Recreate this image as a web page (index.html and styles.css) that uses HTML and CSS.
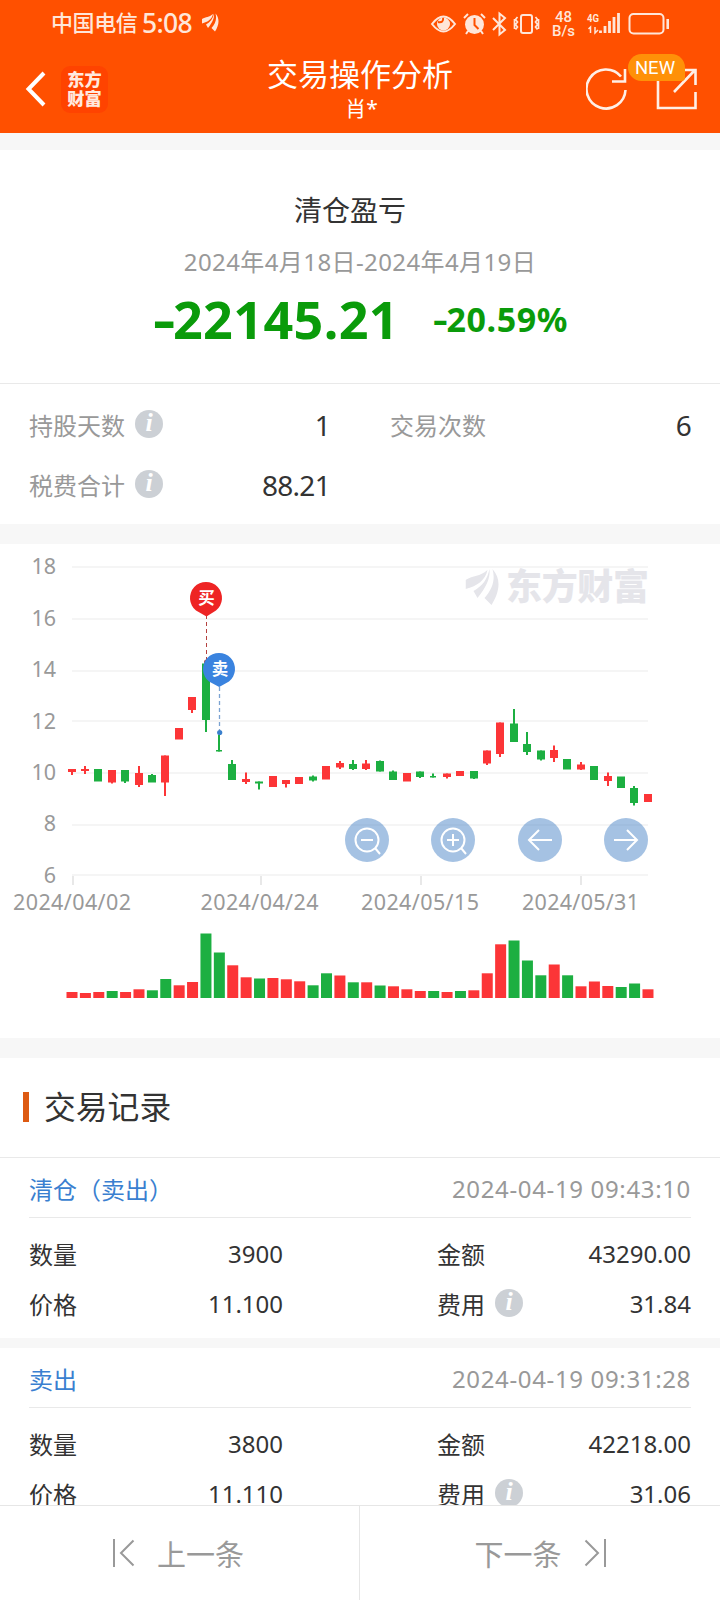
FILE: index.html
```html
<!DOCTYPE html>
<html lang="zh-CN">
<head>
<meta charset="utf-8">
<title>交易操作分析</title>
<link rel="stylesheet" href="styles.css">
</head>
<body>
<svg class="defs" width="0" height="0" aria-hidden="true">
  <symbol id="wing" viewBox="0 0 34 36">
    <path d="M0 11C8 6 14 8 22 1C20 11 12 17 0 20Z"/>
    <path d="M24 0C25 10 20 19 12 29L8 22C17 17 22 10 24 0Z"/>
    <path d="M27 0C37 11 33 25 26 36L19 29C27 20 30 11 27 0Z"/>
  </symbol>
</svg>
<div class="screen">
  <header class="header">
    <div class="status">
      <span class="carrier">中国电信</span><span class="clock">5:08</span>
      <svg class="status-wing"><use href="#wing"/></svg>
      <svg class="status-icons" width="244" height="44" viewBox="428 0 244 44" fill="none" stroke="#ffe6d9" stroke-width="2">
        <path d="M432 23Q443.500 8 455 23Q443.500 38 432 23Z"/>
        <circle cx="443.500" cy="23" r="6.500" fill="#ffe6d9" stroke="none"/><path d="M438 21Q444 22 443 17" stroke="#ff5000"/>
        <circle cx="474.500" cy="23.500" r="9.500" fill="#ffe6d9" stroke="none"/><path d="M474.500 17v7l4 4" stroke="#ff5000"/><path d="M464 17l4-4M485 17l-4-4M468 30l-2 3M481 30l2 3"/>
        <path d="M493 17l12 12-5.500 4.500V12.500L505 17 493 29"/>
        <rect x="521" y="14" width="11" height="18" rx="2"/><path d="M517.500 16l-2 2.500 2 2.500-2 2.500 2 2.500-2 2.500M514.500 18v10M535.500 16l2 2.500-2 2.500 2 2.500-2 2.500 2 2.500M538.500 18v10" stroke-width="1.700"/>
        <g class="status-text"><text x="563.500" y="21" text-anchor="middle">48</text><text x="563.500" y="35" text-anchor="middle">B/s</text></g>
        <text class="net-text" x="587" y="20.500" textLength="12" lengthAdjust="spacingAndGlyphs">4G</text>
        <path d="M590.500 32v-6l-2 2M595 26v6l3-3" stroke-width="1.500"/>
        <path d="M600.500 32v-2.500M605 32v-7M609.500 32V20M614 32V16M618.500 32V12" stroke-width="2.800"/>
        <rect x="629.500" y="13" width="34" height="19.500" rx="4"/><path d="M667.700 18v10" stroke-width="2.600"/>
      </svg>
    </div>
    <div class="nav">
      <svg class="back" width="22" height="38" viewBox="0 0 22 38"><path d="M19 3L3.500 19 19 35" fill="none" stroke="#fff" stroke-width="4"/></svg>
      <div class="brand"><span>东方</span><span>财富</span></div>
      <div class="heading"><h1>交易操作分析</h1><p>肖*</p></div>
      <svg class="refresh" width="44" height="44" viewBox="0 0 44 44" fill="none" stroke="#ffefe6" stroke-width="2.600"><path d="M39.500 23A19.500 19.500 0 1 1 35 9.500"/><path d="M39 2v12.500H26"/></svg>
      <div class="share">
        <svg width="42" height="42" viewBox="0 0 42 42" fill="none" stroke="#ffefe6" stroke-width="2.600"><path d="M14 2H2v38h37.500V24M26 2h13.500v15M39 2L18 24"/></svg>
        <span class="badge">NEW</span>
      </div>
    </div>
  </header>

  <main class="content">
    <section class="summary">
      <h2>清仓盈亏</h2>
      <p class="period">2024年4月18日-2024年4月19日</p>
      <p class="result"><b class="amount"><i>-</i>22145.21</b><b class="rate"><i>-</i>20.59%</b></p>
    </section>
    <section class="stats">
      <div class="pair"><span class="label">持股天数<em class="info">i</em></span><span class="value">1</span></div>
      <div class="pair"><span class="label">交易次数</span><span class="value">6</span></div>
      <div class="pair"><span class="label">税费合计<em class="info">i</em></span><span class="value">88.21</span></div>
    </section>

    <section class="chart">
      <svg class="plot" width="720" height="494" viewBox="0 544 720 494">
        <path class="grid" d="M72 567H648M72 619H648M72 671H648M72 721H648M72 773H648M72 825H648M72 875H648"/>
        <path class="ticks" d="M73 876v9M261 876v9M421 876v9M581 876v9"/>
        <g class="axis" text-anchor="end">
          <text x="56" y="574">18</text><text x="56" y="626">16</text><text x="56" y="677">14</text><text x="56" y="729">12</text><text x="56" y="780">10</text><text x="56" y="831">8</text><text x="56" y="883">6</text>
        </g>
        <g class="axis">
          <text x="13" y="910" textLength="118">2024/04/02</text><text x="200.500" y="910" textLength="118">2024/04/24</text><text x="361" y="910" textLength="118">2024/05/15</text><text x="522" y="910" textLength="117">2024/05/31</text>
        </g>
        <g class="watermark"><use href="#wing" x="465.500" y="569" width="34" height="36"/><text x="506" y="600" textLength="143">东方财富</text></g>
        <g id="candles"></g>
        <g id="volumes"></g>
        <path d="M206.500 615V661" stroke="#b5423f" stroke-dasharray="4 3"/>
        <circle cx="206.500" cy="662" r="2.500" fill="#b5423f"/>
        <path d="M219.500 687V731" stroke="#7ba3d2" stroke-width="1.300" stroke-dasharray="4 3"/>
        <circle cx="219.700" cy="732.500" r="2.600" fill="#3b80cd"/>
        <path d="M196 610.500A16 16 0 1 1 216 610.500L206.500 616.500Z" fill="#ee2424"/>
        <path d="M209 681.500A16 16 0 1 1 229 681.500L219.200 687Z" fill="#3a83df"/>
        <g class="pin-text" text-anchor="middle"><text x="206.500" y="604">买</text><text x="220" y="675">卖</text></g>
      </svg>
      <div class="controls">
        <button><svg viewBox="0 0 44 44"><circle cx="22" cy="22" r="11.500"/><path d="M16 22h12M30 30l5 6"/></svg></button>
        <button><svg viewBox="0 0 44 44"><circle cx="22" cy="22" r="11.500"/><path d="M16 22h12M22 16v12M30 30l5 6"/></svg></button>
        <button><svg viewBox="0 0 44 44"><path d="M34 22H11M21 12L11 22l10 10"/></svg></button>
        <button><svg viewBox="0 0 44 44"><path d="M10 22h23M23 12l10 10-10 10"/></svg></button>
      </div>
    </section>

    <section class="records">
      <h2 class="records-title">交易记录</h2>
      <article class="record">
        <div class="record-head"><span class="kind">清仓（卖出）</span><time>2024-04-19 09:43:10</time></div>
        <div class="record-grid">
          <div class="pair"><span>数量</span><span>3900</span></div>
          <div class="pair"><span>金额</span><span>43290.00</span></div>
          <div class="pair"><span>价格</span><span>11.100</span></div>
          <div class="pair"><span class="label">费用<em class="info">i</em></span><span>31.84</span></div>
        </div>
      </article>
      <article class="record">
        <div class="record-head"><span class="kind">卖出</span><time>2024-04-19 09:31:28</time></div>
        <div class="record-grid">
          <div class="pair"><span>数量</span><span>3800</span></div>
          <div class="pair"><span>金额</span><span>42218.00</span></div>
          <div class="pair"><span>价格</span><span>11.110</span></div>
          <div class="pair"><span class="label">费用<em class="info">i</em></span><span>31.06</span></div>
        </div>
      </article>
    </section>
  </main>

  <footer class="pager">
    <a class="prev"><svg width="22" height="28" viewBox="0 0 22 28"><path d="M1 0v28M20.500 1.500L8 14l12.500 12.500"/></svg>上一条</a>
    <a class="next">下一条<svg width="22" height="28" viewBox="0 0 22 28"><path d="M21 0v28M1.500 1.500L14 14 1.500 26.500"/></svg></a>
  </footer>
</div>
<script src="chart.js"></script>
</body>
</html>
```
FILE: styles.css
```css
* { box-sizing: border-box; }
body { margin: 0; font-family: "Noto Sans", "Noto Sans CJK SC", sans-serif; color: #333; background: #fff; }
h1, h2, p { margin: 0; font-weight: 400; }
.defs { position: absolute; }
.screen { width: 720px; height: 1600px; overflow: hidden; display: flex; flex-direction: column; background: #fff; }

.header { height: 133px; flex: none; background: #ff5000; color: #fff; }
.status { height: 45px; display: flex; align-items: center; padding: 1px 48px 0 51px; color: #ffe6d9; }
.carrier { font-size: 22px; font-weight: 500; letter-spacing: -.4px; width: 91px; line-height: 42px; white-space: nowrap; padding-bottom: 2px; }
.clock { font-size: 26.500px; font-weight: 500; letter-spacing: -.7px; width: 60px; line-height: 44px; }
.status-wing { width: 17px; height: 19px; fill: #ffe6d9; margin-top: -2px; }
.status-icons { margin-left: auto; }
.status-text { font: 500 15px Roboto, sans-serif; fill: #ffe6d9; stroke: none; }
.net-text { font: 700 11px Roboto, sans-serif; fill: #ffe6d9; stroke: none; }
.nav { height: 88px; display: flex; align-items: center; padding: 0 22px 0 25px; }
.brand { width: 47px; height: 47px; margin-left: 14px; padding-bottom: 2px; border-radius: 9px; background: #ff4300; display: flex; flex-direction: column; align-items: center; justify-content: center; font: 900 17.200px/19.500px "Noto Sans CJK SC", sans-serif; color: #ffe9df; }
.heading { flex: 1; text-align: center; padding-left: 26px; }
.heading h1 { font-size: 31px; line-height: 38px; }
.heading p { font-size: 21px; line-height: 30px; padding-left: 3px; }
.refresh { margin: 0 26px 0 0; }
.share { width: 42px; height: 42px; position: relative; }
.share svg { display: block; }
.badge { position: absolute; left: -28px; top: -14px; width: 57px; height: 27px; border-radius: 14px 14px 4px 14px; background: #ff9108; font: 18.500px/28px Roboto, sans-serif; text-align: center; padding-right: 3px; }

.content { flex: 1; min-height: 0; overflow: hidden; border-top: 17px solid #f7f7f7; }
.summary { height: 234px; padding-top: 39px; text-align: center; border-bottom: 1px solid #e9e9e9; }
.summary h2 { font-size: 28px; line-height: 42px; padding-right: 20px; }
.period { font-size: 24px; line-height: 36px; margin-top: 13px; letter-spacing: .4px; color: #999; }
.result { display: flex; align-items: center; justify-content: center; height: 70px; margin-top: 4px; gap: 36px; color: #0a9b0a; padding-left: 4px; }
.result b { font-weight: 700; line-height: 70px; white-space: nowrap; }
.result i { font-style: normal; display: inline-block; }
.amount { font-size: 52px; letter-spacing: .4px; }
.rate { font-size: 34px; letter-spacing: .6px; margin-top: -1px; }
.amount i, .rate i { transform: scaleX(1.350); }

.stats { height: 140px; padding: 11px 29px 0 29px; display: grid; grid-template-columns: 301px 301px; grid-auto-rows: 60px; column-gap: 60px; }
.pair { display: flex; align-items: center; justify-content: space-between; }
.label { display: flex; align-items: center; }
.info { width: 28px; height: 28px; margin: 0 0 0 10px; border-radius: 50%; background: #ccd0d5; color: #fff; font: italic 700 26px/26px "Liberation Serif", serif; text-align: center; }
.stats .label { font-size: 24px; color: #999; margin-top: -2px; }
.stats .value { font-size: 28px; letter-spacing: -.7px; }

.chart { position: relative; height: 534px; border-top: 20px solid #f7f7f7; border-bottom: 20px solid #f7f7f7; }
.plot { display: block; }
.grid { stroke: #f5f5f5; stroke-width: 2; }
.ticks { stroke: #e8e8e8; stroke-width: 2; }
.axis { font-size: 21.500px; fill: #999; }
.watermark { fill: #e5e5ea; font: 900 36px "Noto Sans CJK SC", sans-serif; }
.pin-text { font: 700 16.500px "Noto Sans CJK SC", sans-serif; fill: #fff; }
.up { fill: #fc3537; }
.down { fill: #1caf41; }
.controls { position: absolute; top: 274px; left: 345px; width: 303px; display: flex; justify-content: space-between; }
.controls button { width: 44px; height: 44px; padding: 0; border: 0; border-radius: 50%; background: rgba(75, 134, 200, .5); }
.controls svg { display: block; width: 44px; height: 44px; fill: none; stroke: #fff; stroke-width: 2; }

.records-title { height: 100px; display: flex; align-items: center; padding: 0 0 1px 23px; font-size: 31.800px; line-height: 46px; border-bottom: 1px solid #e9e9e9; }
.records-title::before { content: ""; width: 6px; height: 30px; margin-right: 15px; background: #dd5a12; }
.record { height: 190px; padding: 0 29px; border-bottom: 10px solid #f7f7f7; font-size: 24px; }
.record-head { height: 60px; display: flex; align-items: center; justify-content: space-between; border-bottom: 1px solid #e9e9e9; padding-top: 1px; }
.kind { color: #3a7fd0; }
.record time { color: #999; letter-spacing: .65px; }
.record-grid { padding-top: 10px; display: grid; grid-template-columns: 254px 254px; justify-content: space-between; grid-auto-rows: 50px; }
.record .info { margin-top: -1px; }

.pager { height: 95px; flex: none; display: flex; background: #fff; border-top: 1px solid #e6e6e6; color: #999; font-size: 29px; }
.pager a { flex: 1; display: flex; align-items: center; gap: 22px; }
.pager svg { fill: none; stroke: #999; stroke-width: 2; }
.prev { padding-left: 113px; border-right: 1px solid #e6e6e6; }
.next { padding-left: 115px; }
```
FILE: chart.js
```js
const NS = "http://www.w3.org/2000/svg";
const FIRST = 72, STEP = 13.395, BASE = 998;

// Each row: direction, body top, body bottom, wick top, wick bottom, volume height,
// and the volume bar's own direction where it differs.
const days = [
  ["up", 769, 772, 769, 775, 6], ["up", 769, 771, 766, 774, 5], ["down", 769, 781.5, 769, 781, 6, "up"],
  ["up", 770, 782.5, 770, 783.5, 7, "down"], ["down", 770, 781.5, 770, 783, 6, "up"], ["up", 773, 785, 766, 787, 8.700],
  ["down", 775, 782.5, 774, 782, 7.700], ["up", 755.5, 782.5, 755.5, 796, 19, "down"], ["up", 728, 739.5, 728, 739, 12.700],
  ["up", 697, 710, 697, 713, 16], ["down", 663.5, 720, 663.5, 732, 64.500], ["down", 750, 751.5, 735, 751.5, 45.500],
  ["down", 764, 780, 760, 780, 32.700, "up"], ["up", 779, 782, 772.5, 784, 20.700], ["down", 781.5, 783.5, 781.5, 789.5, 19.500],
  ["up", 776, 787, 776, 787, 20], ["up", 780, 784, 780, 787.5, 18.700], ["up", 777, 784, 777, 784, 16.700],
  ["down", 776.5, 780.5, 775.5, 781.5, 12.700], ["up", 766, 779.5, 766, 779.5, 24.700, "down"], ["up", 763, 767.5, 761, 769, 22.500],
  ["down", 764, 769, 760, 770, 15.700], ["up", 763.5, 769, 760, 770, 15.700], ["down", 761, 771.5, 760.5, 771.5, 12.500],
  ["down", 771.5, 780, 770.5, 780, 11.700, "up"], ["up", 773, 781.5, 773, 781.5, 8.700], ["down", 771.5, 777, 771.5, 778, 7, "up"],
  ["down", 776, 777.5, 773.5, 777.5, 7], ["up", 773.5, 777, 773.5, 778.5, 6], ["up", 771, 776, 771, 776, 7, "down"],
  ["down", 771, 778.5, 771, 779, 7.700, "up"], ["up", 750.5, 763.5, 750.5, 765, 24.700], ["up", 722.5, 754, 722.5, 757, 53.700],
  ["down", 723.5, 742, 709, 742, 57.500], ["down", 744, 752, 732, 755, 37.500], ["down", 750.5, 759.5, 750.5, 760.5, 22.700],
  ["up", 750, 758, 745.5, 762, 33.500], ["down", 759, 769.5, 759, 769.5, 22.700], ["up", 764.5, 769.5, 762, 770, 11.700],
  ["down", 766, 780, 766, 780, 16.500, "up"], ["up", 776, 781, 772.5, 786, 12], ["down", 776.5, 788, 776.5, 788, 11],
  ["down", 788, 803, 786, 805.5, 14.500], ["up", 794, 802, 794, 802, 8.700]
];

const candles = document.getElementById("candles");
const volumes = document.getElementById("volumes");

function bar(parent, kind, x, y, width, height) {
  const rect = document.createElementNS(NS, "rect");
  rect.setAttribute("class", kind);
  rect.setAttribute("x", x);
  rect.setAttribute("y", y);
  rect.setAttribute("width", width);
  rect.setAttribute("height", height);
  parent.append(rect);
}

days.forEach(([kind, top, bottom, high, low, volume, volumeKind], i) => {
  const center = FIRST + STEP * i;
  const width = bottom - top === 1.5 ? 6 : 8;
  bar(candles, kind, Math.round(center - width / 2 - 0.3), top, width, bottom - top);
  if (high < top || low > bottom) bar(candles, kind, Math.round(center - 0.3) - 1, high, 2, low - high);
  bar(volumes, volumeKind || kind, center - 5.500, BASE - volume, 11, volume);
});
```
